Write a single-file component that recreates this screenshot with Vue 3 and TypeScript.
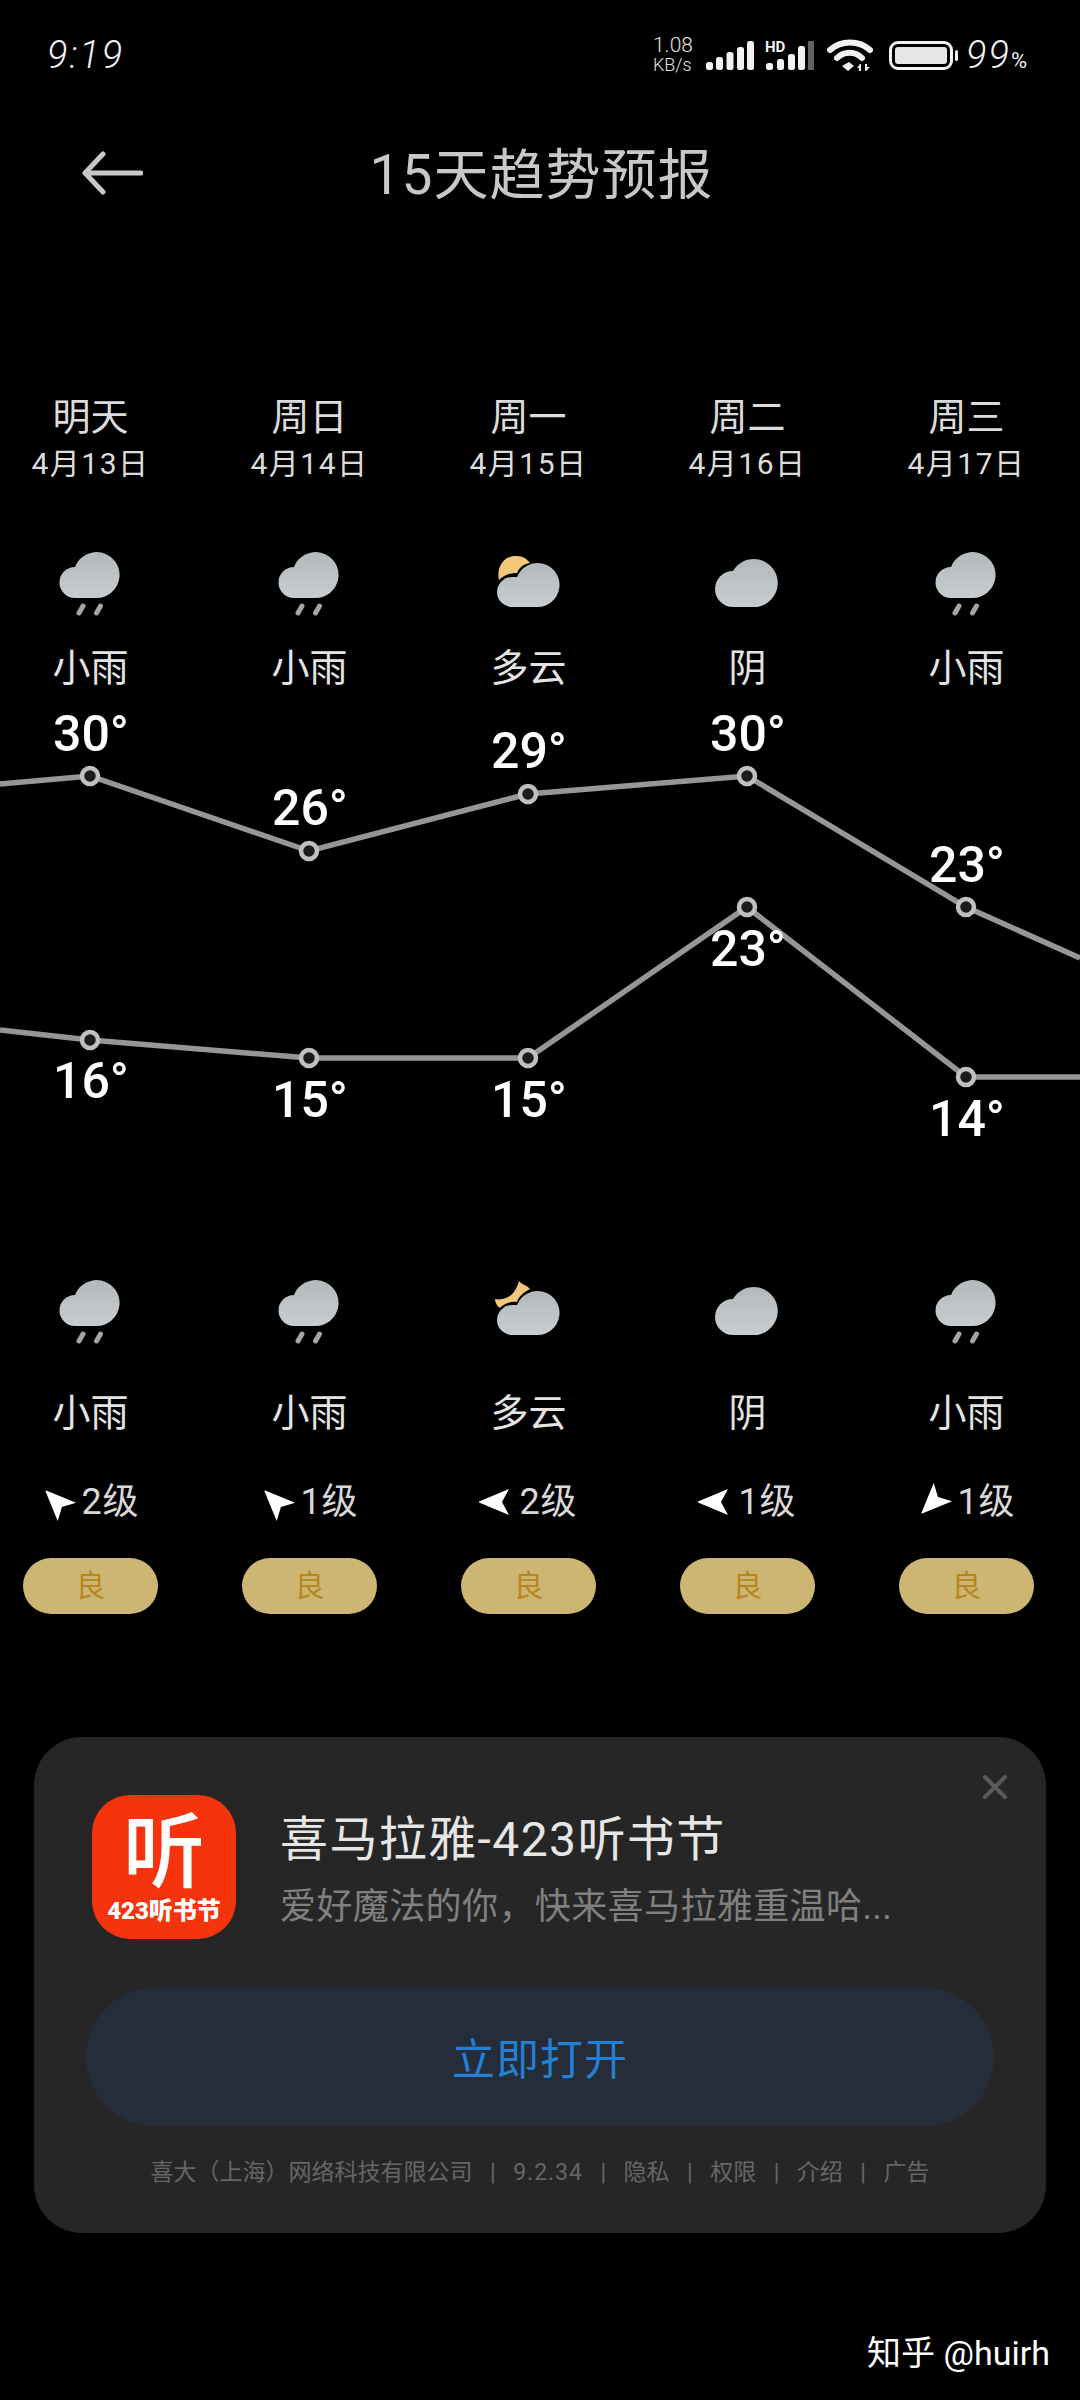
<script setup lang="ts">
type Kind = 'rain' | 'sun' | 'moon' | 'overcast'
interface Day {
  week: string
  date: string
  dayIcon: Kind
  nightIcon: Kind
  dayText: string
  nightText: string
  wind: string
  windAngle: number
}
interface Part {
  d: string
  fill?: string
  stroke?: string
}

const days: Day[] = [
  { week: '明天', date: '4月13日', dayIcon: 'rain', nightIcon: 'rain', dayText: '小雨', nightText: '小雨', wind: '2级', windAngle: -45 },
  { week: '周日', date: '4月14日', dayIcon: 'rain', nightIcon: 'rain', dayText: '小雨', nightText: '小雨', wind: '1级', windAngle: -45 },
  { week: '周一', date: '4月15日', dayIcon: 'sun', nightIcon: 'moon', dayText: '多云', nightText: '多云', wind: '2级', windAngle: -90 },
  { week: '周二', date: '4月16日', dayIcon: 'overcast', nightIcon: 'overcast', dayText: '阴', nightText: '阴', wind: '1级', windAngle: -90 },
  { week: '周三', date: '4月17日', dayIcon: 'rain', nightIcon: 'rain', dayText: '小雨', nightText: '小雨', wind: '1级', windAngle: 225 }
]

const cloudFill = 'url(#cloudGrad)'
const smallCloud = 'M19 57 A15 15 0 0 1 19 27 L24 27 A22 22 0 1 1 44 57 Z'
const icons: Record<Kind, Part[]> = {
  rain: [
    { d: 'M20 48 A15.5 15.5 0 0 1 20 17 A23 23 0 1 1 41 48 Z', fill: cloudFill },
    { d: 'M28 56 L24 63 M45.5 56 L41.5 63', stroke: '#a0a5a8' }
  ],
  sun: [
    { d: 'M6 30 C3 16 12 5 24 6 C30 6 34 9 37 13 C30 14 26 18 24 23 C16 23 10 26 6 30 Z', fill: '#f4c878' },
    { d: smallCloud, fill: cloudFill }
  ],
  moon: [
    { d: 'M2 21 C12 23 22 18 26 3 C29 7 34 7 37 11 C31 14 26 18 24 24 C17 23 11 26 7 30 C4 28 2 25 2 21 Z', fill: '#f4c878' },
    { d: smallCloud, fill: cloudFill }
  ],
  overcast: [
    { d: 'M21 57 A18 18 0 0 1 21 21 A24 24 0 1 1 42 57 Z', fill: cloudFill }
  ]
}

// chart box starts at y = 690 of the page, x = 0
const highPts = [[0, 94], [90, 86], [309, 161], [528, 104], [747, 86], [966, 217], [1080, 268]]
const lowPts = [[0, 340], [90, 350], [309, 368], [528, 368], [747, 217], [966, 387], [1080, 387]]
const toLine = (p: number[][]) => p.map((q) => q.join(',')).join(' ')

const labels = [
  { x: 91, y: 61, t: '30°' }, { x: 310, y: 135, t: '26°' }, { x: 529, y: 78, t: '29°' },
  { x: 748, y: 61, t: '30°' }, { x: 967, y: 192, t: '23°' },
  { x: 91, y: 408, t: '16°' }, { x: 310, y: 427, t: '15°' }, { x: 529, y: 427, t: '15°' },
  { x: 748, y: 276, t: '23°' }, { x: 967, y: 446, t: '14°' }
]
const dots = [...highPts.slice(1, 6), ...lowPts.slice(1, 6)]

const signalBars = [
  { x: 0, h: 8 }, { x: 10, h: 13 }, { x: 20.5, h: 18 }, { x: 31, h: 23 }, { x: 41, h: 29 }
]
const hdBars = [
  { x: 0, h: 7 }, { x: 11, h: 11 }, { x: 22, h: 16 }, { x: 32, h: 24 }
]
</script>

<template>
  <div class="page">
    <div class="status">
      <span class="time">9:19</span>
      <div class="status-right">
        <div class="speed"><span>1.08</span><span class="unit">KB/s</span></div>
        <svg class="bars" width="48" height="29" viewBox="0 0 48 29">
          <rect v-for="b in signalBars" :key="b.x" :x="b.x" :y="29 - b.h" width="7" :height="b.h" rx="2.5" fill="#f2f2f2" />
        </svg>
        <div class="hd">
          <span class="hd-text">HD</span>
          <svg width="48" height="29" viewBox="0 0 48 29">
            <rect v-for="b in hdBars" :key="b.x" :x="b.x" :y="29 - b.h" width="7" :height="b.h" rx="2.5" fill="#f2f2f2" />
            <rect x="42" y="0" width="6" height="29" fill="#626262" />
          </svg>
        </div>
        <svg class="wifi" width="46" height="32" viewBox="0 0 46 32">
          <path d="M3 11 C14 1 32 1 43 11" fill="none" stroke="#f2f2f2" stroke-width="6" stroke-linecap="round" />
          <path d="M10 19 C17 12 28 12 35 19" fill="none" stroke="#f2f2f2" stroke-width="6" stroke-linecap="round" />
          <path d="M15 27 L22 23 L27 27 L21 32 Z" fill="#f2f2f2" />
          <path d="M33 25 L30 29 H32 V32 H34 V25 Z M38 25 H40 V28 H43 L39 32 H38 Z" fill="#f2f2f2" />
        </svg>
        <div class="battery"><div class="battery-fill"></div><div class="battery-tip"></div></div>
        <span class="pct">99<small>%</small></span>
      </div>
    </div>

    <div class="nav">
      <svg class="back" width="62" height="44" viewBox="0 0 62 44">
        <path d="M60 22 H5 M22 3 L4 22 L22 41" fill="none" stroke="#c8c8c8" stroke-width="5" stroke-linecap="round" stroke-linejoin="round" />
      </svg>
      <h1 class="title">15天趋势预报</h1>
    </div>

    <div class="columns top">
      <div v-for="d in days" :key="d.date" class="col">
        <div class="week">{{ d.week }}</div>
        <div class="date">{{ d.date }}</div>
        <div class="icon-slot top-icon">
          <svg width="70" height="66" viewBox="0 0 70 66">
            <path v-for="(p, i) in icons[d.dayIcon]" :key="i" :d="p.d" :fill="p.fill || 'none'" :stroke="p.stroke" stroke-width="5" stroke-linecap="round" />
          </svg>
        </div>
        <div class="cond">{{ d.dayText }}</div>
      </div>
    </div>

    <div class="chart">
      <svg class="chart-lines" width="1080" height="490" viewBox="0 0 1080 490">
        <defs>
          <linearGradient id="cloudGrad" x1="0" y1="0" x2="0" y2="1">
            <stop offset="0" stop-color="#b3b8bb" />
            <stop offset="1" stop-color="#c7cdd0" />
          </linearGradient>
        </defs>
        <polyline :points="toLine(highPts)" fill="none" stroke="#969696" stroke-width="5.5" />
        <polyline :points="toLine(lowPts)" fill="none" stroke="#969696" stroke-width="5.5" />
        <circle v-for="(p, i) in dots" :key="i" :cx="p[0]" :cy="p[1]" r="8" fill="#1c1c1c" stroke="#c0c0c0" stroke-width="4.5" />
        <text v-for="(l, i) in labels" :key="'t' + i" :x="l.x" :y="l.y" class="temp" text-anchor="middle">{{ l.t }}</text>
      </svg>
    </div>

    <div class="columns bottom">
      <div v-for="d in days" :key="d.date" class="col">
        <div class="icon-slot">
          <svg width="70" height="66" viewBox="0 0 70 66">
            <path v-for="(p, i) in icons[d.nightIcon]" :key="i" :d="p.d" :fill="p.fill || 'none'" :stroke="p.stroke" stroke-width="5" stroke-linecap="round" />
          </svg>
        </div>
        <div class="cond night">{{ d.nightText }}</div>
        <div class="wind">
          <svg class="wind-arrow" width="32" height="32" viewBox="-16 -16 32 32" :style="{ transform: `rotate(${d.windAngle}deg)` }">
            <path d="M0 -17 L13 14 L0 7 L-13 14 Z" fill="#fff" />
          </svg>
          <span>{{ d.wind }}</span>
        </div>
        <div class="pill">良</div>
      </div>
    </div>

    <div class="card">
      <span class="close">
        <svg width="26" height="26" viewBox="0 0 26 26">
          <path d="M3 3 L23 23 M23 3 L3 23" stroke="#5a5a5a" stroke-width="4" stroke-linecap="round" />
        </svg>
      </span>
      <div class="app-row">
        <div class="app-icon">
          <span class="app-big">听</span>
          <span class="app-small">423听书节</span>
        </div>
        <div class="app-text">
          <div class="app-title">喜马拉雅-423听书节</div>
          <div class="app-sub">爱好魔法的你，快来喜马拉雅重温哈...</div>
        </div>
      </div>
      <button class="open">立即打开</button>
      <div class="legal">
        <span>喜大（上海）网络科技有限公司</span><i>|</i><span class="ver">9.2.34</span><i>|</i><span>隐私</span><i>|</i><span>权限</span><i>|</i><span>介绍</span><i>|</i><span>广告</span>
      </div>
    </div>

    <div class="mark">知乎 @huirh</div>
  </div>
</template>

<style>
html,
body {
  margin: 0;
  background: #000;
}
</style>

<style scoped>
.page {
  width: 1080px;
  height: 2400px;
  background: #000;
  overflow: hidden;
  color: #e8e8e8;
  font-family: Roboto, "Noto Sans CJK SC", sans-serif;
}

.status {
  height: 110px;
  display: flex;
  align-items: center;
  justify-content: space-between;
  padding: 0 53px 0 47px;
  box-sizing: border-box;
}

.time {
  font-size: 38px;
  font-weight: 300;
  font-style: italic;
  letter-spacing: 2px;
  color: #f0f0f0;
}

.status-right {
  display: flex;
  align-items: center;
}

.speed {
  display: flex;
  flex-direction: column;
  width: 44px;
  font-size: 21px;
  line-height: 20px;
  font-weight: 300;
  color: #e0e0e0;
  margin-right: 9px;
}

.unit {
  font-size: 18px;
}

.bars {
  margin-right: 12px;
}

.hd {
  position: relative;
  width: 48px;
  height: 29px;
  margin-right: 13px;
}

.hd-text {
  position: absolute;
  left: -1px;
  top: 0;
  font-size: 15px;
  line-height: 12px;
  font-weight: 700;
  color: #f2f2f2;
}

.hd svg {
  display: block;
}

.wifi {
  margin-right: 16px;
}

.battery {
  position: relative;
  width: 64px;
  height: 29px;
  border: 3px solid #f0f0f0;
  border-radius: 9px;
  box-sizing: border-box;
  padding: 3px;
  margin-right: 13px;
}

.battery-fill {
  height: 100%;
  background: #e6e6e6;
  border-radius: 3px;
}

.battery-tip {
  position: absolute;
  right: -8px;
  top: 6px;
  width: 3px;
  height: 11px;
  background: #f0f0f0;
  border-radius: 2px;
}

.pct {
  font-size: 38px;
  font-weight: 300;
  font-style: italic;
  letter-spacing: 2px;
  color: #f0f0f0;
}

.pct small {
  font-size: 22px;
  font-style: normal;
  font-weight: 400;
  letter-spacing: 0;
}

.nav {
  position: relative;
  height: 130px;
  display: flex;
  align-items: center;
  justify-content: center;
}

.back {
  position: absolute;
  left: 81px;
  top: 41px;
}

.title {
  margin: 0 0 0 3px;
  font-size: 55px;
  line-height: 60px;
  font-weight: 400;
  color: #c8c8c8;
  letter-spacing: 1px;
}

.columns {
  display: grid;
  grid-template-columns: repeat(5, 219px);
  margin-left: -19px;
  text-align: center;
}

.col {
  display: flex;
  flex-direction: column;
  align-items: center;
}

.top {
  padding-top: 155px;
}

.week {
  font-size: 38px;
  line-height: 44px;
  color: #dcdcdc;
}

.date {
  font-size: 30px;
  line-height: 40px;
  margin-top: 5px;
  letter-spacing: 1.5px;
  color: #dcdcdc;
}

.icon-slot {
  height: 66px;
  display: flex;
  justify-content: center;
}

.icon-slot svg {
  margin-left: -1px;
}

.top-icon {
  margin-top: 66px;
}

.cond {
  margin-top: 30px;
  font-size: 38px;
  line-height: 44px;
  height: 44px;
  color: #e4e4e4;
}

.chart {
  height: 588px;
}

.chart-lines {
  display: block;
}

.temp {
  font-family: Roboto, sans-serif;
  font-size: 50px;
  font-weight: 500;
  fill: #fff;
}

.bottom .cond.night {
  margin-top: 47px;
}

.wind {
  margin-top: 45px;
  height: 44px;
  display: flex;
  align-items: center;
  justify-content: center;
  gap: 8px;
  font-size: 36px;
  line-height: 44px;
  letter-spacing: 1px;
  color: #d8d8d8;
}

.wind-arrow {
  flex: none;
}

.pill {
  width: 135px;
  height: 56px;
  margin-top: 34px;
  border-radius: 28px;
  background: #cdb673;
  color: #b7861f;
  font-size: 30px;
  line-height: 56px;
}

.card {
  position: relative;
  width: 1012px;
  height: 496px;
  margin: 123px 0 0 34px;
  padding: 58px 50px 0;
  box-sizing: border-box;
  background: #262626;
  border-radius: 48px;
}

.close {
  position: absolute;
  right: 38px;
  top: 37px;
  line-height: 0;
}

.app-row {
  display: flex;
  align-items: center;
  gap: 44px;
  margin-left: 8px;
}

.app-icon {
  width: 144px;
  height: 144px;
  flex: none;
  border-radius: 38px;
  background: #f5330c;
  color: #fff;
  display: flex;
  flex-direction: column;
  align-items: center;
  overflow: hidden;
}

.app-big {
  margin-top: 15px;
  font-size: 82px;
  line-height: 86px;
  font-weight: 500;
}

.app-small {
  font-size: 24px;
  line-height: 30px;
  font-weight: 900;
  white-space: nowrap;
}

.app-text {
  margin-top: 6px;
}

.app-title {
  font-size: 48px;
  line-height: 60px;
  letter-spacing: 1.4px;
  color: #e6e6e6;
}

.app-sub {
  margin-top: 14px;
  font-size: 36px;
  line-height: 46px;
  letter-spacing: 0.4px;
  color: #808080;
}

.open {
  display: block;
  width: 908px;
  height: 138px;
  margin: 49px 0 0 2px;
  padding: 0 0 3px;
  border: 0;
  border-radius: 69px;
  background: #242d39;
  color: #2480d4;
  font-family: inherit;
  font-size: 43px;
  letter-spacing: 1px;
}

.legal {
  margin-top: 31px;
  display: flex;
  justify-content: center;
  gap: 17.5px;
  font-size: 23px;
  line-height: 32px;
  color: #666;
}

.legal i {
  font-style: normal;
}

.ver {
  letter-spacing: 1px;
}

.mark {
  margin: 98px 30px 0 0;
  text-align: right;
  font-size: 34px;
  line-height: 44px;
  color: #fff;
}
</style>
